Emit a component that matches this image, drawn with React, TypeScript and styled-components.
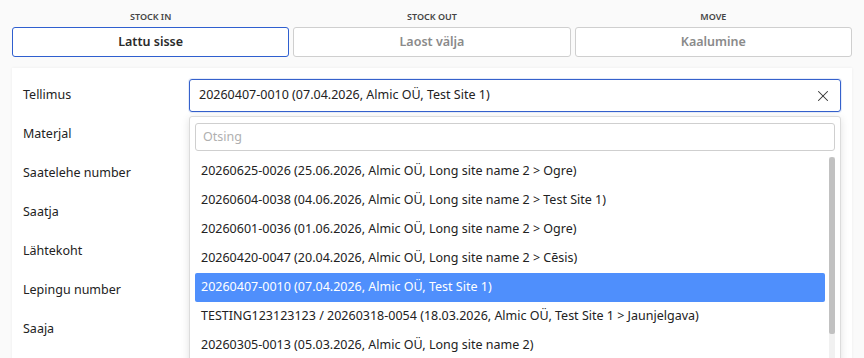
import React from 'react';
import styled, { createGlobalStyle } from 'styled-components';
import { X } from 'lucide-react';

const GlobalStyle = createGlobalStyle`
  html, body {
    margin: 0;
    padding: 0;
    background: #fafafa;
    font-family: 'Noto Sans', 'Open Sans', sans-serif;
    color: #222;
  }
  * { box-sizing: border-box; }
`;

const tabs = [
  { caption: 'Stock in', label: 'Lattu sisse', active: true },
  { caption: 'Stock out', label: 'Laost välja', active: false },
  { caption: 'Move', label: 'Kaalumine', active: false },
];

const fields = [
  'Tellimus',
  'Materjal',
  'Saatelehe number',
  'Saatja',
  'Lähtekoht',
  'Lepingu number',
  'Saaja',
];

const selected = '20260407-0010 (07.04.2026, Almic OÜ, Test Site 1)';

const orders = [
  '20260625-0026 (25.06.2026, Almic OÜ, Long site name 2 > Ogre)',
  '20260604-0038 (04.06.2026, Almic OÜ, Long site name 2 > Test Site 1)',
  '20260601-0036 (01.06.2026, Almic OÜ, Long site name 2 > Ogre)',
  '20260420-0047 (20.04.2026, Almic OÜ, Long site name 2 > Cēsis)',
  selected,
  'TESTING123123123 / 20260318-0054 (18.03.2026, Almic OÜ, Test Site 1 > Jaunjelgava)',
  '20260305-0013 (05.03.2026, Almic OÜ, Long site name 2)',
  '20260227-0009 (27.02.2026, Almic OÜ, Test Site 1)',
];

const Page = styled.div`
  padding: 12px 12px 0;
  height: 358px;
  overflow: hidden;
`;

const TabRow = styled.div`
  display: grid;
  grid-template-columns: repeat(3, 1fr);
  gap: 4px;
`;

const TabColumn = styled.div`
  display: flex;
  flex-direction: column;
  align-items: stretch;
`;

const TabCaption = styled.div`
  font-size: 9px;
  font-weight: 600;
  text-transform: uppercase;
  color: #444;
  text-align: center;
  height: 15px;
  line-height: 10px;
`;

const TabButton = styled.button<{ $active: boolean }>`
  height: 30px;
  border-radius: 3px;
  border: 1px solid ${({ $active }) => ($active ? '#2f5fcf' : '#cfcfcf')};
  background: #fff;
  font-family: inherit;
  font-size: 12.5px;
  font-weight: 600;
  line-height: 26px;
  color: ${({ $active }) => ($active ? '#2a2a2a' : '#8a8a8a')};
  padding: 0;
  cursor: pointer;
`;

const Card = styled.div`
  margin-top: 11px;
  background: #fff;
  box-shadow: 0 0 3px rgba(0, 0, 0, 0.06);
  padding: 11px 11px 20px 11px;
`;

const Form = styled.div`
  display: grid;
  grid-template-columns: 166px 1fr;
  grid-auto-rows: 33px;
  row-gap: 6px;
`;

const Label = styled.div`
  display: flex;
  align-items: center;
  padding-bottom: 3px;
  font-size: 12.5px;
  color: #222;
`;

const FieldCell = styled.div`
  position: relative;
`;

const SelectBox = styled.div`
  height: 33px;
  display: flex;
  align-items: center;
  justify-content: space-between;
  padding: 0 8px 2px 9px;
  border: 1px solid #3561cc;
  border-radius: 3px;
  box-shadow: 0 0 0 1px rgba(53, 97, 204, 0.12);
  font-size: 12.5px;
  color: #222;
  background: #fff;

  svg {
    margin-top: 2px;
  }
`;

const Dropdown = styled.div`
  position: absolute;
  top: 37px;
  left: 0;
  right: 0;
  z-index: 5;
  background: #fff;
  border: 1px solid #dcdcdc;
  border-radius: 3px;
  box-shadow: 0 2px 8px rgba(0, 0, 0, 0.12);
  padding: 6px 5px;
`;

const Search = styled.input`
  display: block;
  width: 100%;
  height: 28px;
  border: 1px solid #cfcfcf;
  border-radius: 3px;
  padding: 0 7px 2px;
  font-family: inherit;
  font-size: 12.5px;
  color: #222;
  outline: none;

  &::placeholder {
    color: #b0b0b0;
  }
`;

const ListArea = styled.div`
  margin-top: 6px;
  display: flex;
  gap: 4px;
  height: 232px;
`;

const OptionList = styled.div`
  flex: 1;
  min-width: 0;
  overflow: hidden;
`;

const ScrollTrack = styled.div`
  width: 6px;
  flex-shrink: 0;
  background: #f1f1f1;
`;

const ScrollThumb = styled.div`
  height: 177px;
  background: #c1c1c1;
  border-radius: 3px 3px 2px 2px;
`;

const Option = styled.div<{ $selected: boolean }>`
  height: 29px;
  display: flex;
  align-items: center;
  padding: 0 6px 2px;
  border-radius: 2px;
  font-size: 12.5px;
  white-space: nowrap;
  overflow: hidden;
  background: ${({ $selected }) => ($selected ? '#4f8ffc' : 'transparent')};
  color: ${({ $selected }) => ($selected ? '#fff' : '#222')};
`;

export default function App() {
  return (
    <Page>
      <GlobalStyle />
      <TabRow>
        {tabs.map((tab) => (
          <TabColumn key={tab.caption}>
            <TabCaption>{tab.caption}</TabCaption>
            <TabButton $active={tab.active}>{tab.label}</TabButton>
          </TabColumn>
        ))}
      </TabRow>
      <Card>
        <Form>
          {fields.map((field, i) => (
            <React.Fragment key={field}>
              <Label>{field}</Label>
              <FieldCell>
                {i === 0 && (
                  <>
                    <SelectBox>
                      <span>{selected}</span>
                      <X size={18} strokeWidth={1.4} color="#333" />
                    </SelectBox>
                    <Dropdown>
                      <Search placeholder="Otsing" />
                      <ListArea>
                        <OptionList>
                          {orders.map((order) => (
                            <Option key={order} $selected={order === selected}>
                              {order}
                            </Option>
                          ))}
                        </OptionList>
                        <ScrollTrack>
                          <ScrollThumb />
                        </ScrollTrack>
                      </ListArea>
                    </Dropdown>
                  </>
                )}
              </FieldCell>
            </React.Fragment>
          ))}
        </Form>
      </Card>
    </Page>
  );
}
